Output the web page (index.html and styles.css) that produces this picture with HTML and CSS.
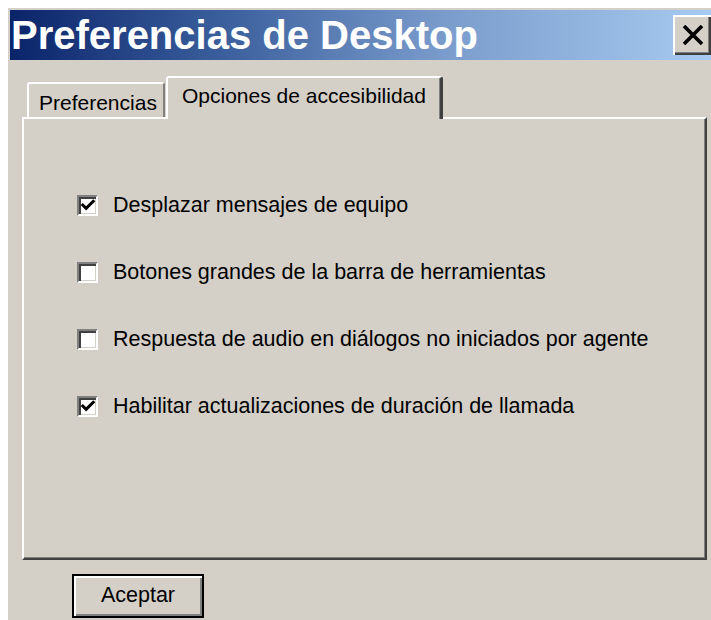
FILE: index.html
```html
<!DOCTYPE html>
<html lang="es">
<head>
<meta charset="utf-8">
<title>Preferencias de Desktop</title>
<link rel="stylesheet" href="styles.css">
</head>
<body>
<div class="window">
  <div class="titlebar">
    <span class="title">Preferencias de Desktop</span>
    <button class="close" type="button" aria-label="Cerrar">
      <svg width="22" height="20" viewBox="0 0 22 20"><path d="M2 1 L20 19 M20 1 L2 19" stroke="#000" stroke-width="3.6" fill="none"/></svg>
    </button>
  </div>

  <div class="tabs-area">
    <div class="tabs">
      <div class="tab">Preferencias</div>
      <div class="tab tab-active">Opciones de accesibilidad</div>
    </div>
    <div class="panel">
      <label class="option">
        <span class="box checked"><svg width="17" height="17" viewBox="0 0 17 17"><path d="M3 8 L6.5 11.5 L14 4" stroke="#000" stroke-width="3.2" fill="none" stroke-linecap="square"/></svg></span>
        <span class="label">Desplazar mensajes de equipo</span>
      </label>
      <label class="option">
        <span class="box"></span>
        <span class="label">Botones grandes de la barra de herramientas</span>
      </label>
      <label class="option">
        <span class="box"></span>
        <span class="label">Respuesta de audio en diálogos no iniciados por agente</span>
      </label>
      <label class="option">
        <span class="box checked"><svg width="17" height="17" viewBox="0 0 17 17"><path d="M3 8 L6.5 11.5 L14 4" stroke="#000" stroke-width="3.2" fill="none" stroke-linecap="square"/></svg></span>
        <span class="label">Habilitar actualizaciones de duración de llamada</span>
      </label>
    </div>
  </div>

  <div class="actions">
    <button class="btn-default" type="button">Aceptar</button>
  </div>
</div>
</body>
</html>
```

FILE: styles.css
```css
html, body {
  margin: 0;
  padding: 0;
  background: #ffffff;
  overflow: hidden;
}

body {
  width: 711px;
  height: 620px;
  font-family: "Liberation Sans", Arial, sans-serif;
  color: #000;
}

.window {
  margin: 8px 0 0 8px;
  height: 612px;
  background: #d4d0c8;
  padding-top: 2px;
  box-sizing: border-box;
  display: flex;
  flex-direction: column;
}

/* caption bar with the classic navy-to-sky gradient */
.titlebar {
  margin-left: 2px;
  height: 50px;
  display: flex;
  align-items: flex-start;
  justify-content: space-between;
  background: linear-gradient(to right, #0a246a 0%, #3a5e9c 30%, #7a9ccc 62%, #a6caf0 100%);
  overflow: hidden;
}

.title {
  padding-left: 1px;
  font-size: 40px;
  font-weight: bold;
  line-height: 50px;
  color: #ffffff;
  white-space: nowrap;
}

.close {
  margin-top: 5px;
  width: 38px;
  height: 40px;
  padding: 0 0 0 2px;
  display: flex;
  align-items: center;
  justify-content: center;
  background: #d4d0c8;
  border: 0;
  box-shadow: inset 2px 2px 0 #ffffff, inset -2px -2px 0 #404040, inset -3px -3px 0 #808080;
}

.tabs-area {
  margin: 16px 4px 0 14px;
  display: flex;
  flex-direction: column;
}

.tabs {
  display: flex;
  align-items: flex-end;
  padding-left: 5px;
  height: 41px;
  font-size: 21px;
  position: relative;
  z-index: 1;
}

.tab {
  height: 35px;
  box-sizing: border-box;
  padding: 7px 9px 0 10px;
  border-top: 2px solid #ffffff;
  border-left: 2px solid #ffffff;
  border-right: 2px solid #808080;
  border-top-left-radius: 3px;
  border-top-right-radius: 3px;
  white-space: nowrap;
  margin-bottom: 0;
  width: 138px;
}

.tab-active {
  width: 277px;
  height: 43px;
  margin-bottom: -2px;
  padding: 6px 0 0 14px;
  margin-left: 1px;
  background: #d4d0c8;
  border-right: 3px solid #404040;
  box-shadow: inset -1px 0 0 #808080;
}

.panel {
  height: 443px;
  box-sizing: border-box;
  border-top: 2px solid #ffffff;
  border-left: 2px solid #ffffff;
  border-right: 2px solid #404040;
  border-bottom: 2px solid #404040;
  box-shadow: inset -1px -1px 0 #808080;
  padding: 73px 0 0 53px;
  display: flex;
  flex-direction: column;
  gap: 41px;
  font-size: 21.5px;
}

.option {
  height: 26px;
  display: flex;
  align-items: center;
  gap: 15px;
  white-space: nowrap;
}

/* sunken check box */
.box {
  width: 21px;
  height: 21px;
  box-sizing: border-box;
  background: #ffffff;
  border: 2px solid;
  border-color: #808080 #ffffff #ffffff #808080;
  box-shadow: inset 2px 2px 0 #404040, inset -1px -1px 0 #d4d0c8;
  display: flex;
  align-items: center;
  justify-content: center;
}

.box svg {
  display: block;
  margin: 1px 0 0 1px;
}

.actions {
  padding: 14px 0 0 64px;
}

.btn-default {
  width: 132px;
  height: 44px;
  font-family: "Liberation Sans", Arial, sans-serif;
  font-size: 21.5px;
  color: #000;
  background: #d4d0c8;
  border: 2px solid #000000;
  box-shadow: inset 2px 2px 0 #ffffff, inset -2px -2px 0 #808080;
  padding: 0 0 2px 0;
}
```
